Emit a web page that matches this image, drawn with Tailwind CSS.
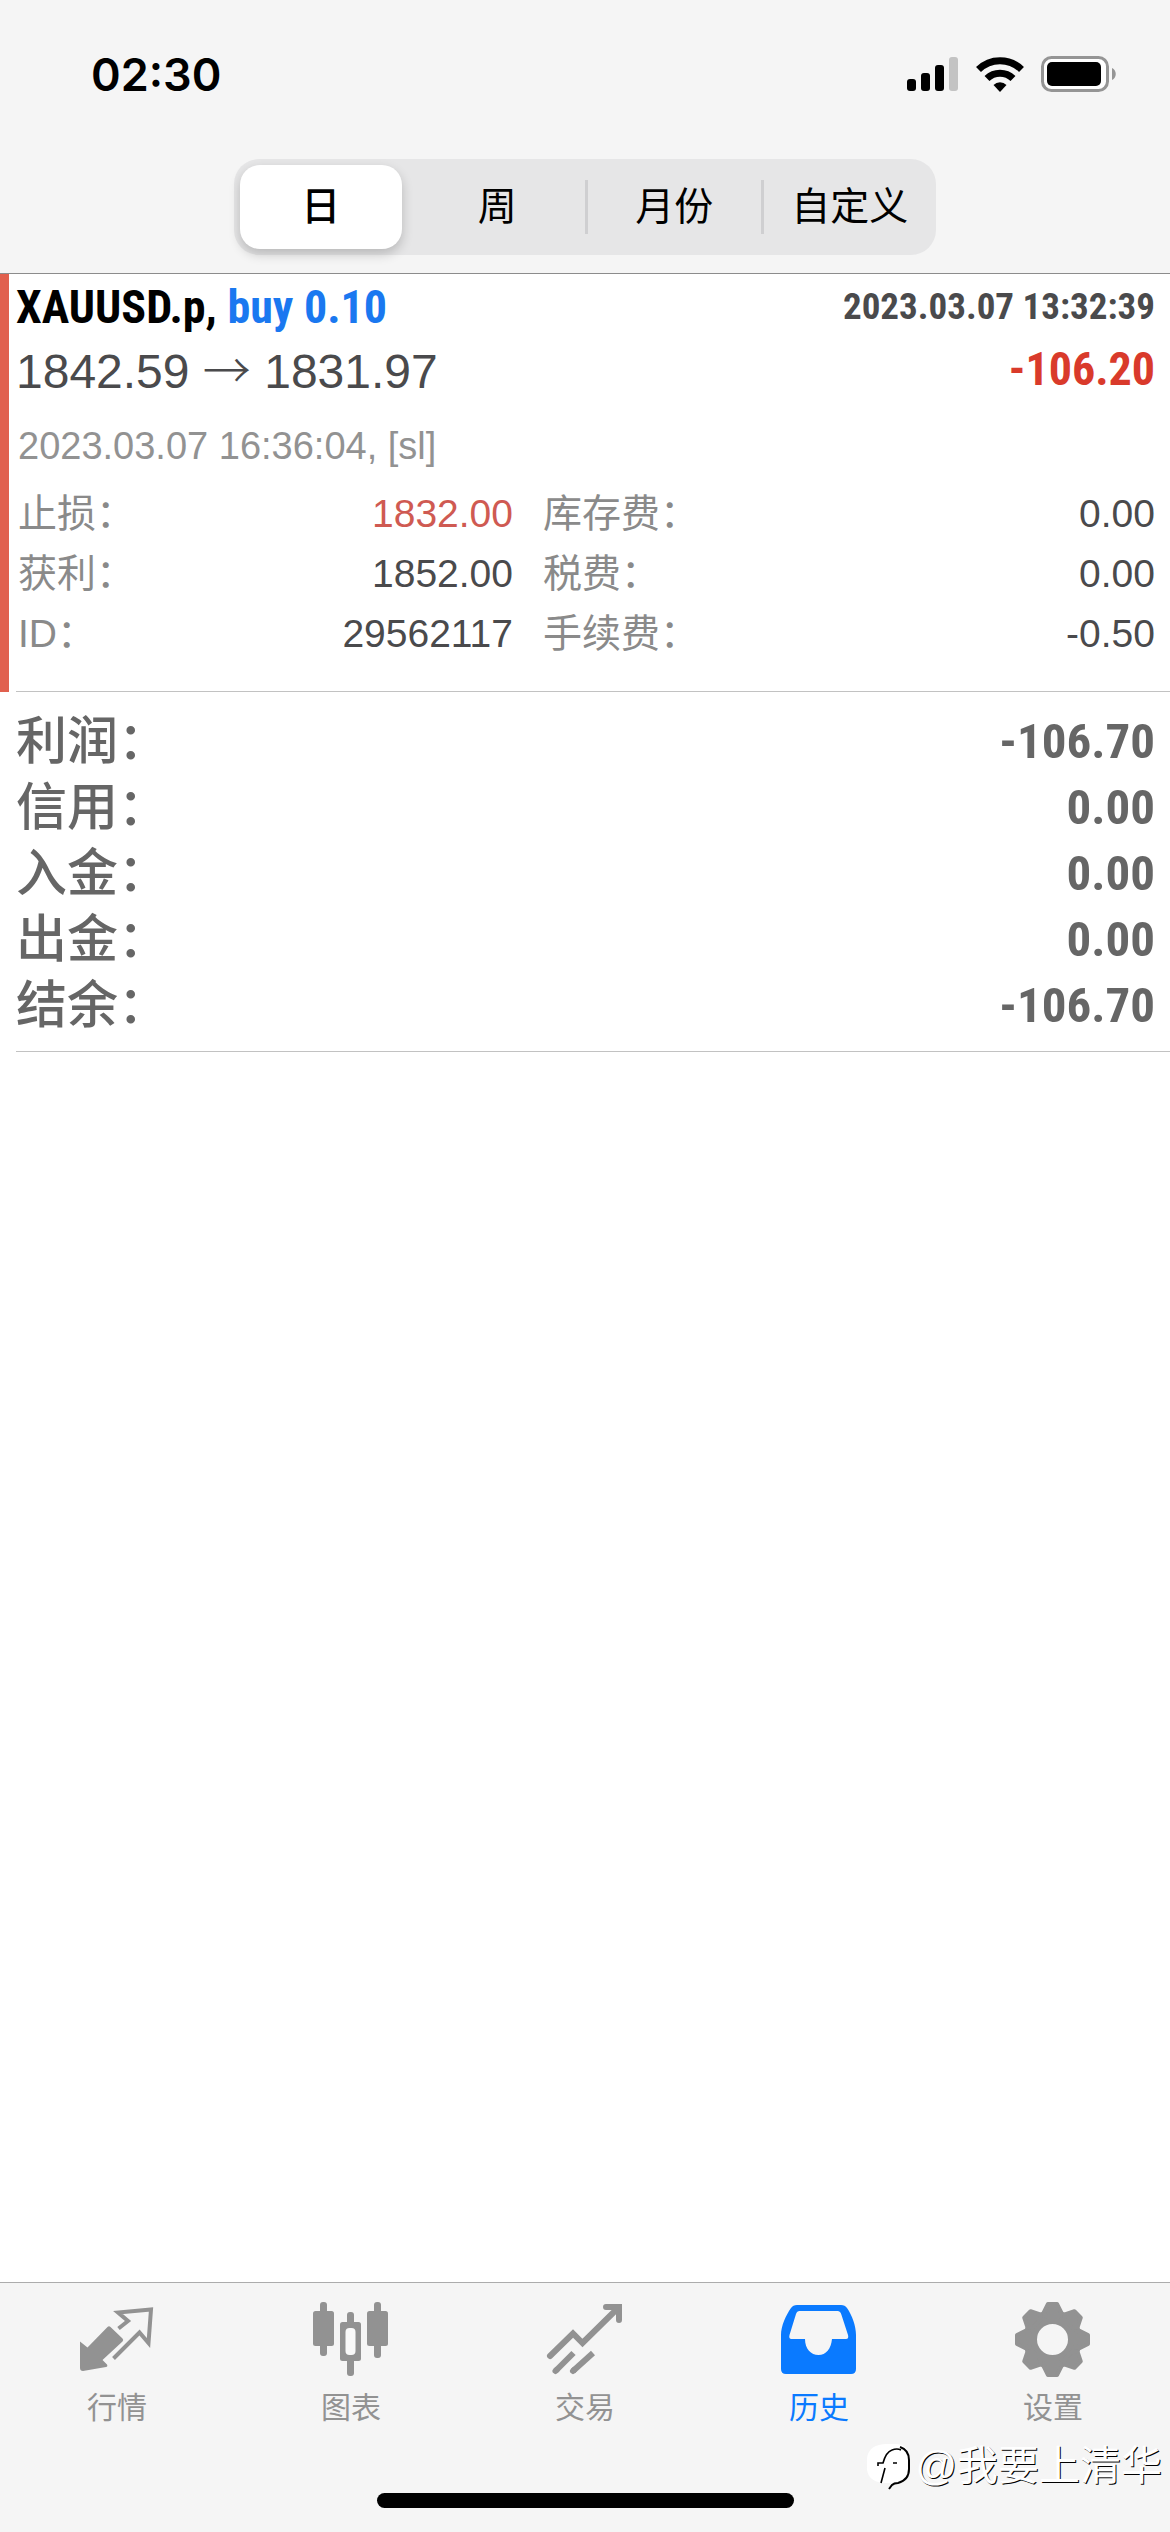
<!DOCTYPE html>
<html lang="zh-CN">
<head>
<meta charset="utf-8">
<meta name="viewport" content="width=device-width, initial-scale=1">
<title>历史</title>
<script src="https://cdn.jsdelivr.net/npm/@tailwindcss/browser@4"></script>
</head>
<body class="bg-white">
<div class="relative flex min-h-screen flex-col font-['Liberation_Sans','Noto_Sans_CJK_SC',sans-serif] text-[#4a4a4c]">

  <header class="border-b border-[#8c8c8c] bg-[#f5f5f5] pb-[18px]">
    <!-- status bar -->
    <div class="flex h-[159px] items-start justify-between pt-[46px] pr-[53px] pl-[91px]">
      <time class="font-['Inter',sans-serif] text-[45px] leading-[58px] font-semibold text-black">02:30</time>
      <div class="flex h-[56px] items-center gap-[17px]">
        <svg class="h-9 w-[52px]" viewBox="0 0 52 36" aria-label="signal">
          <rect x="0" y="23" width="9" height="12" rx="3"/><rect x="14" y="17" width="9" height="18" rx="3"/><rect x="28" y="9" width="9" height="26" rx="3"/><rect x="42" y="1" width="9" height="34" rx="3" fill="#c3c3c3"/>
        </svg>
        <svg class="h-9 w-12" viewBox="0 0 48 36" aria-label="wifi">
          <g fill="none" stroke="#000" stroke-width="7"><path d="M2.500 13.500a30.500 30.500 0 0 1 43 0"/><path d="M11 22.500a18.500 18.500 0 0 1 26 0"/></g>
          <path d="M24 36l-6.500-7a9 9 0 0 1 13 0z"/>
        </svg>
        <svg class="h-9 w-[76px]" viewBox="0 0 76 36" aria-label="battery">
          <rect x="1.500" y="1.500" width="65" height="33" rx="9" fill="#fff" stroke="#959595" stroke-width="3"/><rect x="6" y="6" width="54" height="24" rx="5"/><path d="M71 12c5 2 5 10 0 12z" fill="#959595"/>
        </svg>
      </div>
    </div>

    <!-- period selector -->
    <nav class="mx-auto grid h-24 w-[60%] grid-cols-4 rounded-[25px] bg-[#e6e6e7] text-[39px] text-black">
      <div class="p-[6px] pr-[8px]"><button class="h-full w-full rounded-[20px] bg-white font-medium shadow-[0_5px_12px_rgba(0,0,0,0.2)]">日</button></div>
      <button>周</button>
      <div class="flex items-center"><span class="h-[54px] w-[3px] bg-[#cfcfd1]"></span><button class="h-full flex-1">月份</button></div>
      <div class="flex items-center"><span class="h-[54px] w-[3px] bg-[#cfcfd1]"></span><button class="h-full flex-1">自定义</button></div>
    </nav>
  </header>

  <main class="flex-1">
    <!-- closed deal -->
    <section class="flex">
      <div class="w-[9px] bg-[#e1604e]"></div>
      <div class="ml-[7px] flex-1 border-b border-[#c2c2c2] pr-[15px] pb-[27px]">
        <div class="flex h-[66px] items-center justify-between font-['Roboto_Condensed','Roboto',sans-serif] font-bold">
          <h1 class="text-[46px] text-black">XAUUSD.p, <span class="text-[#1a78f0]">buy 0.10</span></h1>
          <time class="text-[37px]">2023.03.07 13:32:39</time>
        </div>
        <div class="flex h-[58px] items-center justify-between text-[48px]">
          <p>1842.59 <span class="font-['Noto_Sans_CJK_SC'] font-light">→</span> 1831.97</p>
          <strong class="font-['Roboto_Condensed','Roboto',sans-serif] text-[46px] text-[#d93a2b]">-106.20</strong>
        </div>
        <p class="flex h-[86px] items-center pt-[10px] pl-[2px] text-[38px] text-[#929292]">2023.03.07 16:36:04, [sl]</p>
        <div class="grid grid-cols-[495px_1fr] gap-x-[30px] pl-[2px] text-[39px] leading-[60px]">
          <dl>
            <div class="flex justify-between"><dt class="text-[#8a8a8a]">止损：</dt><dd class="text-[#cf5a52]">1832.00</dd></div>
            <div class="flex justify-between"><dt class="text-[#8a8a8a]">获利：</dt><dd>1852.00</dd></div>
            <div class="flex justify-between"><dt class="text-[#8a8a8a]">ID：</dt><dd>29562117</dd></div>
          </dl>
          <dl>
            <div class="flex justify-between"><dt class="text-[#8a8a8a]">库存费：</dt><dd>0.00</dd></div>
            <div class="flex justify-between"><dt class="text-[#8a8a8a]">税费：</dt><dd>0.00</dd></div>
            <div class="flex justify-between"><dt class="text-[#8a8a8a]">手续费：</dt><dd>-0.50</dd></div>
          </dl>
        </div>
      </div>
    </section>

    <!-- totals -->
    <dl class="ml-4 border-b border-[#c2c2c2] pt-[17px] pr-[15px] pb-3 text-[51px] leading-[66px] text-[#666]">
      <div class="flex justify-between"><dt class="font-medium">利润：</dt><dd class="font-['Roboto_Condensed','Roboto',sans-serif] text-[49px] font-bold">-106.70</dd></div>
      <div class="flex justify-between"><dt class="font-medium">信用：</dt><dd class="font-['Roboto_Condensed','Roboto',sans-serif] text-[49px] font-bold">0.00</dd></div>
      <div class="flex justify-between"><dt class="font-medium">入金：</dt><dd class="font-['Roboto_Condensed','Roboto',sans-serif] text-[49px] font-bold">0.00</dd></div>
      <div class="flex justify-between"><dt class="font-medium">出金：</dt><dd class="font-['Roboto_Condensed','Roboto',sans-serif] text-[49px] font-bold">0.00</dd></div>
      <div class="flex justify-between"><dt class="font-medium">结余：</dt><dd class="font-['Roboto_Condensed','Roboto',sans-serif] text-[49px] font-bold">-106.70</dd></div>
    </dl>
  </main>

  <footer class="border-t border-[#acacac] bg-[#f5f5f5] pt-[17px] pb-6">
    <nav class="grid h-[193px] grid-cols-5 text-[30px] leading-[34px] text-[#929292]">
      <a href="#" class="flex flex-col items-center gap-[11px]">
        <svg class="size-20" viewBox="0 0 80 80" fill="currentColor"><path d="M3 41.500l7.500 6L30.500 27q1.500-1.500 3 0L45.500 38.500q1.500 1.500 0 3L25.500 60l4.500 4.500q1 2-1 2.500L6 71q-3 0-3-3z"/><path d="M41.500 28.500L51 21l-10-8.500 33-3L71.500 43l-9-10.500L36.500 58.500" fill="none" stroke="currentColor" stroke-width="4"/></svg>
        行情
      </a>
      <a href="#" class="flex flex-col items-center gap-[11px]">
        <svg class="size-20" viewBox="0 0 80 80" fill="currentColor"><rect x="2" y="11" width="21" height="35" rx="2.500"/><rect x="9" y="2" width="7" height="54" rx="3"/><rect x="56" y="11" width="21" height="35" rx="2.500"/><rect x="63" y="2" width="7" height="56" rx="3"/><rect x="36" y="12" width="7" height="64" rx="3"/><rect x="29" y="22" width="21" height="39" rx="2.500"/><rect x="34.500" y="28" width="10" height="27" rx="4" fill="#f9f9f9"/></svg>
        图表
      </a>
      <a href="#" class="flex flex-col items-center gap-[11px]">
        <svg class="size-20" viewBox="0 0 80 80" fill="none" stroke="currentColor" stroke-width="6" stroke-linecap="round"><path d="M5 56l23-22.500 9.500 9.500L73 8"/><path d="M61 7h13v13"/><path d="M10.500 71l18-18" stroke-linecap="butt"/><path d="M28 71l20-18" stroke-linecap="butt"/><path d="M10.500 71l1-1M28 71l1-1"/></svg>
        交易
      </a>
      <a href="#" class="flex flex-col items-center gap-[11px] text-[#0a7aff]">
        <svg class="size-20" viewBox="0 0 80 80" fill="currentColor"><path fill-rule="evenodd" d="M2 69V35C2 26 7 15 12 8q2-3 6-3h44q4 0 6 3c5 7 9 18 9 27v34q0 5-5 5H7q-5 0-5-5zM20.500 11q-2.500 0-3.500 3L10.500 35q-1 4 2 4H26c0 10 6 16 13.500 16S52 49 53 39h14q3 0 2-4L62.500 15q-1-4-4-4z"/></svg>
        历史
      </a>
      <a href="#" class="flex flex-col items-center gap-[11px]">
        <svg class="size-20" viewBox="0 0 80 80" fill="currentColor" stroke="currentColor" stroke-width="4" stroke-linejoin="round"><circle cx="39.500" cy="39.500" r="22.500" fill="none" stroke-width="14"/><path id="tooth" stroke-width="4" d="M35 4h9l4.500 9-3 4h-12l-3-4z"/><use href="#tooth" transform="rotate(45 39.500 39.500)"/><use href="#tooth" transform="rotate(90 39.500 39.500)"/><use href="#tooth" transform="rotate(135 39.500 39.500)"/><use href="#tooth" transform="rotate(180 39.500 39.500)"/><use href="#tooth" transform="rotate(225 39.500 39.500)"/><use href="#tooth" transform="rotate(270 39.500 39.500)"/><use href="#tooth" transform="rotate(315 39.500 39.500)"/></svg>
        设置
      </a>
    </nav>
    <div class="mx-auto h-[15px] w-[417px] rounded-full bg-black"></div>
  </footer>

  <!-- author mark -->
  <div class="absolute right-2 bottom-9 flex items-center text-[41px] leading-[60px] text-white [text-shadow:1px_1px_0_#000]">
    <svg class="size-12" viewBox="0 0 48 48"><path d="M20 2h9q13 0 13 14v12q0 12-13 13l-8 6 3-6h-4Q2 41 0 28V16Q2 2 20 2z" fill="#fff"/><path d="M33 5q9 3 9 13v9q0 11-11 14-4 0-6 2l-3 4" fill="none" stroke="#000" stroke-width="2"/><path d="M11 24v-3h5q3-11 9-13 5-2 9 0M18 26l-4 15M26 21h4" fill="none" stroke="#000" stroke-width="1.600"/></svg>
    <span>@我要上清华</span>
  </div>
</div>
</body>
</html>
